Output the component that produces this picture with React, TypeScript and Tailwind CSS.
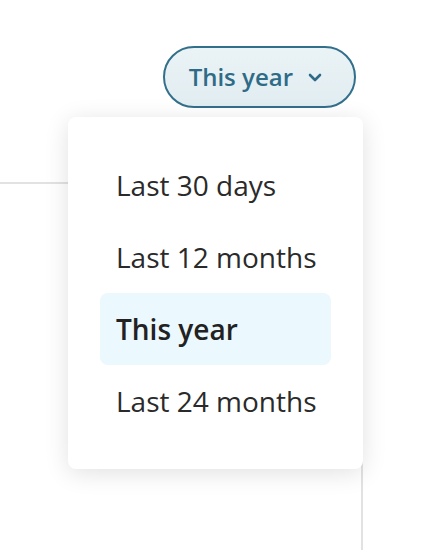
import { useState } from 'react'

const OPTIONS = ['Last 30 days', 'Last 12 months', 'This year', 'Last 24 months']

export default function App() {
  const [selected, setSelected] = useState('This year')

  return (
    <div className="relative w-[438px] h-[550px] overflow-hidden bg-white flex flex-col" style={{ fontFamily: '"Open Sans", "Noto Sans", sans-serif' }}>
      {/* Trigger */}
      <div className="flex justify-end pr-[82px] pt-[46px]">
        <button className="h-[62px] flex items-center gap-[15px] pl-[24px] pr-[32px] rounded-full border-2 border-[#326f8b] bg-gradient-to-b from-[#eaf3f6] to-[#e2edf1] text-[#2f6b87] text-[24px] font-semibold">
          {selected}
          <svg width="14" height="9" viewBox="0 0 14 9" fill="none" stroke="currentColor" strokeWidth="2.6" strokeLinecap="round" strokeLinejoin="round">
            <path d="M2 2l5 5 5-5" />
          </svg>
        </button>
      </div>

      {/* Card behind the menu */}
      <div className="mt-[74px] w-[363px] flex-1 border-t-2 border-r-2 border-[#e2e2e2]" />

      {/* Menu */}
      <div className="absolute left-[68px] top-[117px] w-[295px] rounded-[8px] bg-white px-[32px] py-[32px] shadow-[0_4px_24px_rgba(0,0,0,0.12)] flex flex-col">
        {OPTIONS.map((opt) => (
          <button
            key={opt}
            onClick={() => setSelected(opt)}
            className={`h-[72px] flex items-center px-[16px] rounded-[8px] text-left text-[28px] whitespace-nowrap ${
              opt === selected ? 'bg-[#ebf8fd] font-semibold text-[#222]' : 'text-[#2a2a2a]'
            }`}
          >
            {opt}
          </button>
        ))}
      </div>
    </div>
  )
}
